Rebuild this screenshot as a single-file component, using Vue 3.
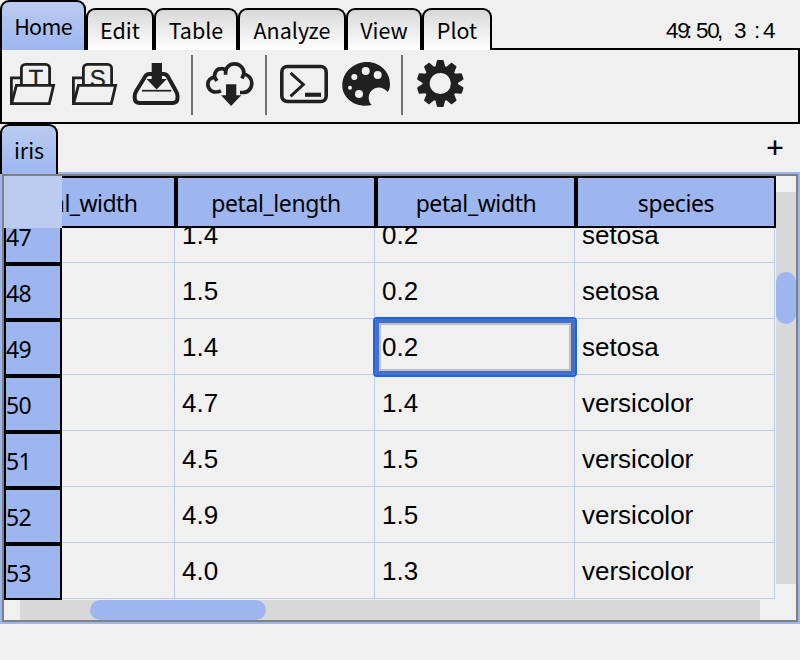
<script setup>
const menus = [
  { name: 'Home', width: 86 },
  { name: 'Edit', width: 68 },
  { name: 'Table', width: 84 },
  { name: 'Analyze', width: 108 },
  { name: 'View', width: 76 },
  { name: 'Plot', width: 70 },
]
const columns = ['sepal_width', 'petal_length', 'petal_width', 'species']
const rows = [
  { id: 47, cells: ['', '1.4', '0.2', 'setosa'] },
  { id: 48, cells: ['', '1.5', '0.2', 'setosa'] },
  { id: 49, cells: ['', '1.4', '0.2', 'setosa'] },
  { id: 50, cells: ['', '4.7', '1.4', 'versicolor'] },
  { id: 51, cells: ['', '4.5', '1.5', 'versicolor'] },
  { id: 52, cells: ['', '4.9', '1.5', 'versicolor'] },
  { id: 53, cells: ['', '4.0', '1.3', 'versicolor'] },
]
const isSelected = (row, c) => row.id === 49 && c === 2
const teeth = Array.from({ length: 10 }, (_, i) => i * 36)
</script>

<template>
  <div class="app">
    <header class="menubar">
      <div
        v-for="(m, i) in menus"
        :key="m.name"
        class="menu"
        :class="{ active: i === 0 }"
        :style="{ width: m.width + 'px' }"
      ><span>{{ m.name }}</span></div>
      <div class="status">
        <span class="s1">49</span><span class="s2">:</span><span class="s3">50</span><span class="s4">,</span><span class="s5">3</span><span class="s6">:</span><span class="s7">4</span>
      </div>
    </header>

    <div class="toolbar">
      <svg v-for="letter in ['T', 'S']" :key="letter" class="icon" viewBox="0 0 48 48">
        <g fill="none" stroke="#202020" stroke-width="2.8">
          <path d="M3.4 43.6V17.9H13" />
          <rect x="13.4" y="4.4" width="28.2" height="30" rx="4" fill="#f0f0f0" />
        </g>
        <text class="glyph" x="27.8" y="27" text-anchor="middle">{{ letter }}</text>
        <path d="M3.6 43.6L8.4 25.4H45.6L41.3 43.6Z" fill="#f0f0f0" stroke="#202020" stroke-width="2.8" />
      </svg>
      <svg class="icon" viewBox="0 0 48 48">
        <path d="M20 14H17.5Q14.8 14 13.3 16.3L4 31.5Q2.7 33.6 2.7 36V38Q2.7 43 7.7 43H40.5Q45.5 43 45.5 38V36Q45.5 33.6 44.2 31.5L35.7 16.3Q34.2 14 31.5 14H29" fill="none" stroke="#202020" stroke-width="4" />
        <path d="M10 30.7H39.3" stroke="#202020" stroke-width="1.7" />
        <path d="M19.7 3H30V19H34.8L24.6 29.5L14.6 19H19.7Z" fill="#202020" />
      </svg>
      <i class="sep" />
      <svg class="icon" viewBox="0 0 48 48">
        <g fill="none" stroke="#202020" stroke-width="3.7">
          <path d="M15 30.8Q12.5 32 9.5 32C4.5 32 1.8 28 1.8 24.3C1.8 20.5 4.5 17.6 8.4 17.4L11 20.8" />
          <path d="M8.8 18.5C7.5 12.5 11 8.6 15.2 8.6Q18 8.5 19.6 10.2V14.8" />
          <path d="M19.4 11C21 6.5 24.2 3.9 28.5 3.9C34 3.9 38 8.3 38 13.2L36 18.5" />
          <path d="M37.5 14C42.5 14.5 45.8 18.8 45.8 23.3C45.8 28.5 42 32.5 37 32.5H34" />
        </g>
        <path d="M20 24.2H30.3V35.3H35.3L25.1 46L15 35.3H20Z" fill="#202020" />
      </svg>
      <i class="sep" />
      <svg class="icon" viewBox="0 0 48 48">
        <rect x="1.8" y="6.5" width="44.4" height="35" rx="5.5" fill="none" stroke="#202020" stroke-width="3.6" />
        <path d="M10.5 12.8L23.3 24.5L10.5 36.3" fill="none" stroke="#202020" stroke-width="3" />
        <path d="M25 32.7H41V36.8H25Z" fill="#202020" />
      </svg>
      <svg class="icon" viewBox="0 0 48 48">
        <path fill="#202020" d="M29.7 45C15 48.6 .3 39 .3 25.5C.3 12 12 2 25 2C38 2 48 12 48 24C48 27 47.4 30 45.7 32C41 26.5 34 26 29.5 30.8C25.5 35 26 41 29.7 45Z" />
        <g fill="#f0f0f0">
          <circle cx="23.7" cy="11" r="4" />
          <circle cx="35.7" cy="15" r="4" />
          <circle cx="12.3" cy="17" r="3" />
          <circle cx="8" cy="27.7" r="2" />
          <circle cx="17" cy="34" r="4" />
        </g>
      </svg>
      <i class="sep" />
      <svg class="icon" viewBox="0 0 48 48">
        <g transform="translate(24.3 23.5)">
          <circle r="14.2" fill="none" stroke="#202020" stroke-width="7.2" />
          <path v-for="a in teeth" :key="a" :transform="`rotate(${a})`" d="M-5 -16.5L-3.4 -22.8Q-3.2 -23.5 -2.4 -23.5H2.4Q3.2 -23.5 3.4 -22.8L5 -16.5Z" fill="#202020" />
        </g>
      </svg>
    </div>

    <div class="sheets">
      <div class="sheet"><span>iris</span></div>
      <div class="add">+</div>
    </div>

    <div class="panel">
      <div class="grid">
        <div class="corner" />
        <div class="heads">
          <div class="headrow">
            <div v-for="c in columns" :key="c" class="head">{{ c }}</div>
          </div>
        </div>
        <div class="vbar"><div class="vtrack"><div class="vthumb" /></div></div>
        <div class="labels">
          <div class="labelcol">
            <div v-for="r in rows" :key="r.id" class="label"><span>{{ r.id }}</span></div>
          </div>
        </div>
        <div class="body">
          <div class="cells">
            <template v-for="r in rows" :key="r.id">
              <div v-for="(v, c) in r.cells" :key="c" class="cell">
                {{ v }}
                <div v-if="isSelected(r, c)" class="selection" />
              </div>
            </template>
          </div>
        </div>
        <div class="hbar"><div class="htrack"><div class="hthumb" /></div></div>
      </div>
    </div>
  </div>
</template>

<style>
body { background: #f0f0f0; }
</style>

<style scoped>
.app, .app * { box-sizing: border-box; }
.app {
  width: 800px;
  height: 660px;
  overflow: hidden;
  background: #f0f0f0;
  color: #000;
  font-family: "Noto Sans", sans-serif;
}
.menubar { display: flex; align-items: flex-end; height: 50px; }
.menu {
  height: 42px;
  flex: none;
  border: 2px solid #000;
  border-bottom: 0;
  border-radius: 9px 9px 0 0;
  background: linear-gradient(#d8d8d8, #fff);
  text-align: center;
  font: 21.5px/40px "Noto Sans CJK JP", "Noto Sans", sans-serif;
  white-space: nowrap;
}
.menu.active {
  height: 50px;
  background: linear-gradient(#bcccf0, #9db6f0);
  line-height: 48px;
  letter-spacing: -.7px;
}
.status {
  flex: 1;
  height: 50px;
  border-bottom: 2px solid #000;
  display: flex;
  padding: 18px 0 0 174px;
  font: 22.5px/26px "Liberation Sans", sans-serif;
  letter-spacing: -1.2px;
}
.status span { flex: none; }
.s1 { width: 20px; }
.s2 { width: 10px; }
.s3 { width: 21px; }
.s4 { width: 17px; }
.s5 { width: 20px; }
.s6 { width: 9px; }
.toolbar {
  height: 74px;
  border: 2px solid #000;
  border-top: 0;
  padding: 5px 0 0 6px;
  display: flex;
  align-items: flex-start;
  gap: 14px;
}
.icon { width: 48px; height: 48px; flex: none; margin-top: 5px; display: block; }
.glyph { font: 24px "Liberation Sans", sans-serif; fill: #202020; stroke: #202020; stroke-width: .3px; }
.sep { width: 2px; height: 60px; margin: 0 -1px 0 -3px; background: #707070; flex: none; }
.sheets { height: 50px; display: flex; justify-content: space-between; }
.sheet {
  width: 58px;
  height: 50px;
  border: 2px solid #000;
  border-bottom: 0;
  border-radius: 9px 9px 0 0;
  background: linear-gradient(#bcccf0, #9db6f0);
  text-align: center;
  font: 21.5px/48px "Noto Sans CJK JP", "Noto Sans", sans-serif;
  position: relative;
  z-index: 1;
}
.add { width: 50px; text-align: center; font: 30px/48px "Liberation Sans", sans-serif; -webkit-text-stroke: .2px #000; }
.panel { margin-top: -2px; height: 452px; border: 2px solid #9db6f0; }
.grid {
  height: 448px;
  border: 2px solid #808080;
  display: grid;
  grid-template-columns: 58px 714px 20px;
  grid-template-rows: 52px 372px 20px;
}
.corner { background: #bcccf0; }
.heads, .labels, .body { overflow: hidden; }
.headrow { display: flex; width: 800px; margin-left: -86px; }
.head {
  width: 200px;
  height: 52px;
  border: 2px solid #000;
  background: #9db6f0;
  text-align: center;
  font-size: 23px;
  line-height: 50px;
  letter-spacing: -.4px;
}
.head:first-child { letter-spacing: -.55px; padding-left: 1px; }
.labelcol { margin-top: -20px; }
.label {
  height: 56px;
  border: 2px solid #000;
  background: #9db6f0;
  font-size: 23px;
  line-height: 54px;
  letter-spacing: -.6px;
}
.label span { display: block; height: 52px; }
.cells {
  display: grid;
  grid-template-columns: repeat(4, 200px);
  margin: -21px 0 0 -87px;
}
.cell {
  position: relative;
  height: 56px;
  border-right: 1px solid #bcccf0;
  border-bottom: 1px solid #bcccf0;
  padding-left: 7px;
  font: 26px/56px "Liberation Sans", sans-serif;
}
.selection {
  position: absolute;
  left: -2px;
  top: -2px;
  width: 204px;
  height: 60px;
  border: 2px solid #1c62f2;
  border-radius: 4px;
  box-shadow: inset 0 0 0 4px #4470c8, inset 0 0 0 6px #c0c0c0;
  z-index: 1;
}
.vbar { grid-column: 3; grid-row: 1 / 3; padding: 16px 0; }
.vtrack { height: 392px; background: #d8d8d8; padding-top: 80px; }
.vthumb { height: 52px; border-radius: 10px; background: #9db6f0; }
.hbar { grid-column: 1 / 3; grid-row: 3; padding: 0 16px; }
.htrack { height: 20px; background: #d8d8d8; padding-left: 70px; }
.hthumb { width: 176px; height: 20px; border-radius: 10px; background: #9db6f0; }
</style>
